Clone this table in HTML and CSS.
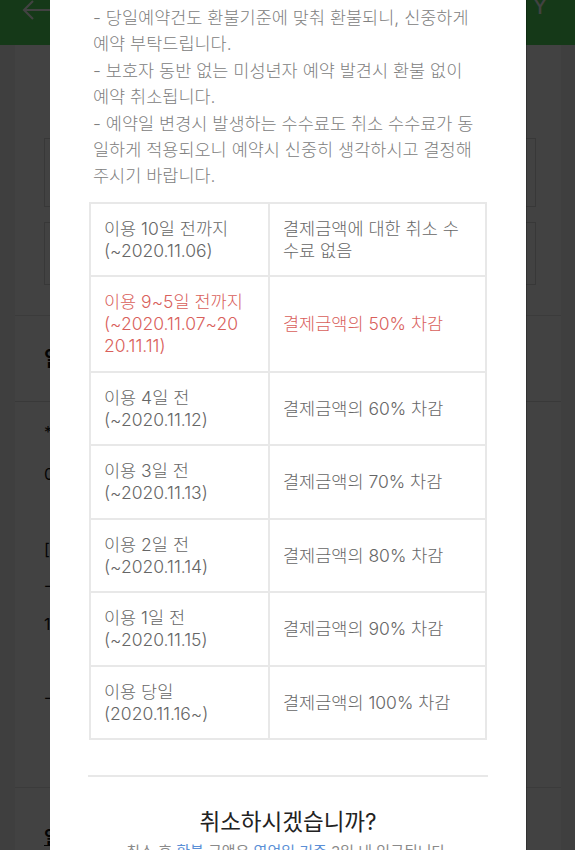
FILE: index.html
```html
<!DOCTYPE html>
<html lang="ko">
<head>
<meta charset="utf-8">
<title>예약 취소</title>
<link rel="stylesheet" href="styles.css">
</head>
<body>
<div class="page">
  <header class="topbar">
    <svg class="back" width="32" height="22" viewBox="0 0 32 22"><path d="M2 10 H31 M11 1 L2 10 L11 19" fill="none" stroke="#fff" stroke-width="2"/></svg>
    <span class="topbar-title">Y</span>
  </header>
  <main class="container">
    <section class="sec sec1">
      <div class="box box1"></div>
      <div class="box box2"></div>
    </section>
    <section class="sec sec2">
      <h2 class="sec-title">일</h2>
      <div class="sec-rule"></div>
      <p class="bg-line l1">*</p>
      <p class="bg-line l2">0</p>
      <p class="bg-line l3">[</p>
      <p class="bg-line l4">-</p>
      <p class="bg-line l5">1</p>
      <p class="bg-line l6">-</p>
    </section>
    <section class="sec sec3">
      <span class="bg-link">일</span>
    </section>
  </main>
</div>
<div class="overlay"></div>
<div class="modal">
  <p class="notice">- 당일예약건도 환불기준에 맞춰 환불되니, 신중하게<br>예약 부탁드립니다.<br>- 보호자 동반 없는 미성년자 예약 발견시 환불 없이<br>예약 취소됩니다.<br>- 예약일 변경시 발생하는 수수료도 취소 수수료가 동<br>일하게 적용되오니 예약시 신중히 생각하시고 결정해<br>주시기 바랍니다.</p>
  <table class="fee-table">
    <tbody>
      <tr><td class="c-when">이용 10일 전까지<br>(~2020.11.06)</td><td class="c-fee">결제금액에 대한 취소 수<br>수료 없음</td></tr>
      <tr class="is-current"><td class="c-when">이용 9~5일 전까지<br>(~2020.11.07~20<br>20.11.11)</td><td class="c-fee">결제금액의 50% 차감</td></tr>
      <tr><td class="c-when">이용 4일 전<br>(~2020.11.12)</td><td class="c-fee">결제금액의 60% 차감</td></tr>
      <tr><td class="c-when">이용 3일 전<br>(~2020.11.13)</td><td class="c-fee">결제금액의 70% 차감</td></tr>
      <tr><td class="c-when">이용 2일 전<br>(~2020.11.14)</td><td class="c-fee">결제금액의 80% 차감</td></tr>
      <tr><td class="c-when">이용 1일 전<br>(~2020.11.15)</td><td class="c-fee">결제금액의 90% 차감</td></tr>
      <tr><td class="c-when">이용 당일<br>(2020.11.16~)</td><td class="c-fee">결제금액의 100% 차감</td></tr>
    </tbody>
  </table>
  <div class="divider"></div>
  <h3 class="confirm-title">취소하시겠습니까?</h3>
  <p class="confirm-text">취소 후 <span class="hl">환불</span> 금액은 <span class="hl">영업일 기준</span> 3일 내 입금됩니다.</p>
</div>
</body>
</html>
```
FILE: styles.css
```css
* { box-sizing: border-box; }
html, body { margin: 0; padding: 0; }
body {
  width: 575px;
  height: 850px;
  overflow: hidden;
  position: relative;
  background: #f2f2f2;
  font-family: Inter, "Noto Sans CJK KR", sans-serif;
}
.page { width: 575px; }
.topbar {
  height: 45px;
  background: #54dc5e;
  display: flex;
  justify-content: space-between;
  align-items: flex-start;
  padding: 0 27px 0 22px;
}
.back { display: block; margin-top: 0; }
.topbar-title {
  color: #fff;
  font-family: "Liberation Sans", sans-serif;
  font-size: 24px;
  line-height: 20px;
  margin-top: -4px;
}
.container {
  margin: 0 14px 0 15px;
  background: #fff;
  min-height: 805px;
}
.sec { padding: 0 25px 0 29px; border-bottom: 1px solid #e4e4e4; }
.sec1 { padding-top: 93px; padding-bottom: 30px; }
.box { border: 1px solid #d6d6d6; }
.box1 { height: 69px; }
.box2 { height: 63px; margin-top: 15px; }
.sec2 { padding-top: 29px; height: 472px; }
.sec-title { margin: 0; font-size: 20px; line-height: 28px; font-weight: 700; color: #111; }
.sec-rule { height: 1px; background: #ddd; margin-top: 28px; margin-left: -29px; margin-right: -25px; }
.bg-line { margin: 0; font-size: 16px; line-height: 24px; color: #111; white-space: nowrap; }
.l1 { margin-top: 18px; }
.l2 { margin-top: 18px; }
.l3 { margin-top: 51px; }
.l4 { margin-top: 12px; }
.l5 { margin-top: 15px; }
.l6 { margin-top: 49px; }
.sec3 { padding-top: 37px; border-bottom: none; }
.bg-link { font-size: 18px; line-height: 26px; font-weight: 700; color: #111; text-decoration: underline; }

.overlay {
  position: absolute;
  inset: 0;
  background: rgba(0, 0, 0, 0.74);
}
.modal {
  position: absolute;
  left: 50px;
  top: 0;
  width: 476px;
  height: 850px;
  overflow: hidden;
  background: #fff;
  padding: 5px 39px 0 39px;
  box-shadow: 1px 0 0 rgba(0,0,0,0.25);
}
.notice {
  margin: 0 0 0 4px;
  font-size: 17.5px;
  line-height: 26.4px;
  color: #808080;
  font-weight: 300;
  white-space: nowrap;
}
.fee-table {
  margin-top: 12px;
  width: 398px;
  border-collapse: separate;
  border-spacing: 0;
  border: 1px solid #e8e8e8;
  table-layout: fixed;
}
.fee-table td {
  border: 1px solid #e8e8e8;
  padding: 14px 4px 13.5px 13px;
  font-size: 17.5px;
  line-height: 22px;
  color: #666;
  font-weight: 300;
  vertical-align: middle;
  white-space: nowrap;
}
.c-when { width: 179px; }
.is-current td { color: #d9605b; }
.divider {
  height: 2px;
  background: #e8e8e8;
  margin: 35px -1px 0 -1px;
}
.confirm-title {
  margin: 30px 0 0;
  text-align: center;
  font-size: 22.5px;
  line-height: 30px;
  font-weight: 400;
  color: #222;
}
.confirm-text {
  margin: 5px 0 0;
  text-align: center;
  font-size: 15px;
  line-height: 20px;
  color: #8a8a8a;
  white-space: nowrap;
}
.hl { color: #5b8fd6; }
```
